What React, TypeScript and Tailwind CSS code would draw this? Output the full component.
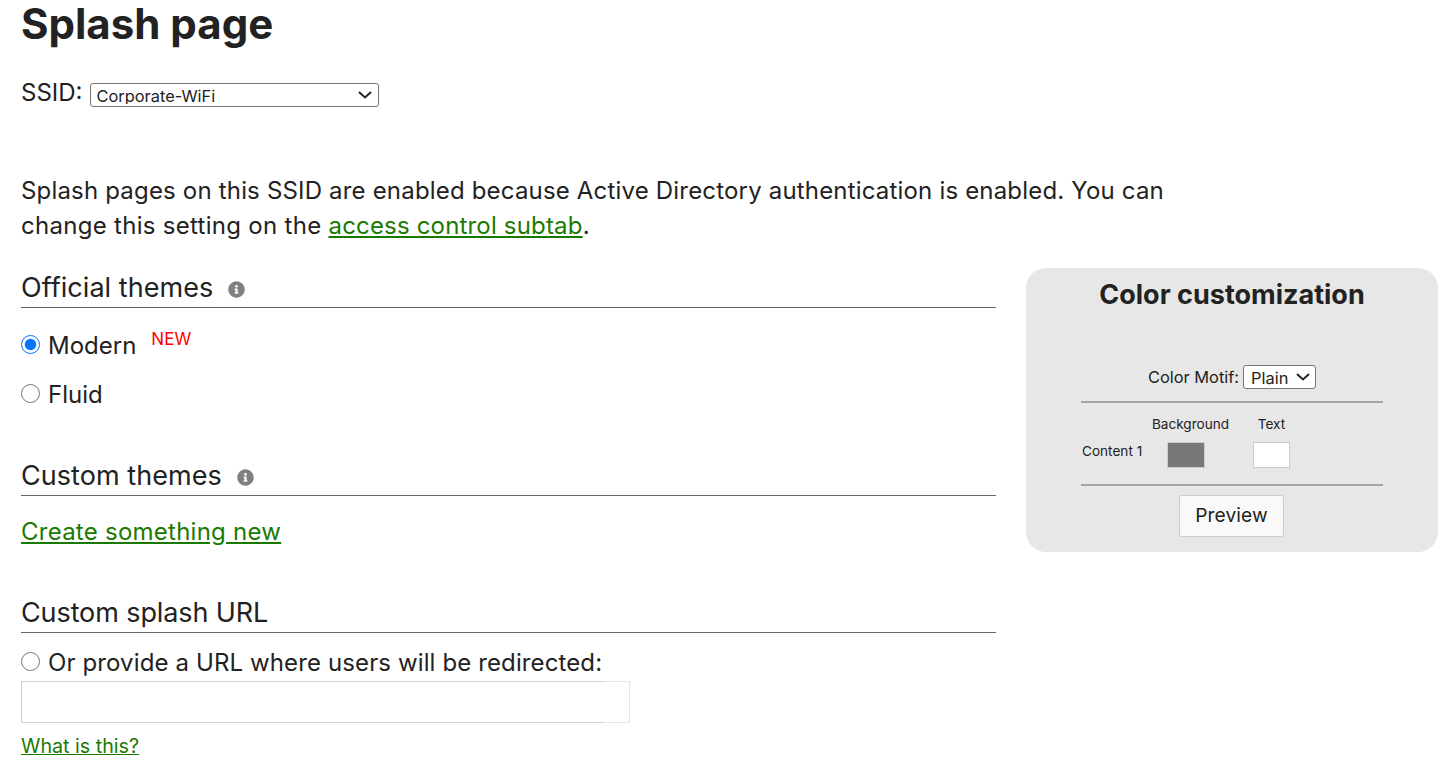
import React from 'react';

function InfoIcon() {
  return (
    <svg viewBox="0 0 512 512" className="w-[17px] h-[17px]" fill="#808080">
      <path d="M256 8C119 8 8 119 8 256s111 248 248 248 248-111 248-248S393 8 256 8zm0 110c23.2 0 42 18.8 42 42s-18.800 42-42 42-42-18.800-42-42 18.800-42 42-42zm56 254c0 6.600-5.400 12-12 12h-88c-6.600 0-12-5.400-12-12v-24c0-6.600 5.400-12 12-12h12v-64h-12c-6.600 0-12-5.400-12-12v-24c0-6.600 5.400-12 12-12h64c6.600 0 12 5.400 12 12v100h12c6.600 0 12 5.400 12 12v24z" />
    </svg>
  );
}

function Chevron({ className }: { className: string }) {
  return (
    <svg viewBox="0 0 14 8" className={`absolute pointer-events-none w-[14px] h-[8px] ${className}`} fill="none" stroke="#222222" strokeWidth="2">
      <path d="M1 1l6 5.500 6-5.500" />
    </svg>
  );
}

function SectionHeader({ title, info }: { title: string; info?: boolean }) {
  return (
    <div className="flex items-center h-[40px] border-b border-[#666666]">
      <h2 className={info ? 'text-[27px] font-normal tracking-[0.05px] leading-[40px]' : 'text-[27px] font-normal tracking-[-0.1px] leading-[40px]'}>
        {title}
      </h2>
      {info && (
        <span className="ml-[15px] mt-[4px]">
          <InfoIcon />
        </span>
      )}
    </div>
  );
}

export default function App() {
  return (
    <div className="pl-[21px] pr-[16px] text-[#222222] bg-white h-[773px] overflow-hidden font-['Inter',sans-serif]">
      <h1 className="text-[42px] font-bold leading-[48px]">Splash page</h1>

      <div className="flex items-center mt-[32px] h-[26px]">
        <label className="text-[24px] mr-[8px]">SSID:</label>
        <div className="relative mt-[3px]">
          <select className="block appearance-none w-[289px] h-[24px] pl-[5px] pb-[2px] text-[16.4px] bg-white border border-[#767676] rounded-[3px]">
            <option>Corporate-WiFi</option>
          </select>
          <Chevron className="right-[7px] top-[8px]" />
        </div>
      </div>

      <p className="mt-[67px] w-[1180px] text-[24px] tracking-[0.18px] leading-[35px]">
        Splash pages on this SSID are enabled because Active Directory authentication is enabled. You can
        <br />
        <span className="tracking-[0.29px]">change this setting on the </span>
        <a href="#" className="text-[#1a7a00] underline">
          access control subtab
        </a>
        .
      </p>

      <div className="flex items-start gap-[30px] mt-[25px]">
        <div className="w-[975px] shrink-0">
          <SectionHeader title="Official themes" info />
          <label className="flex items-center mt-[22px] h-[32px] text-[24px]">
            <input type="radio" name="theme" defaultChecked className="w-[19px] h-[19px] mb-[3px] accent-[#0075ff]" />
            <span className="ml-[8px]">Modern</span>
            <span className="ml-[15px] mb-[12px] text-[17px] text-[#ff0000]">NEW</span>
          </label>
          <label className="flex items-center mt-[17px] h-[32px] text-[24px]">
            <input type="radio" name="theme" className="w-[19px] h-[19px] mb-[3px]" />
            <span className="ml-[8px]">Fluid</span>
          </label>

          <div className="mt-[45px]">
            <SectionHeader title="Custom themes" info />
          </div>
          <a href="#" className="block mt-[18px] text-[24px] tracking-[0.25px] leading-[35px] text-[#1a7a00] underline">
            Create something new
          </a>

          <div className="mt-[44px]">
            <SectionHeader title="Custom splash URL" />
          </div>
          <label className="flex items-center mt-[14px] h-[32px] text-[24px] tracking-[0.12px]">
            <input type="radio" name="url" className="w-[19px] h-[19px] mb-[3px]" />
            <span className="ml-[8px]">Or provide a URL where users will be redirected:</span>
          </label>
          <input
            type="text"
            className="block w-[609px] h-[42px] mt-[2px] border bg-white [border-image:linear-gradient(to_right,#d0d0d0_582px,#e6e6e6_582px)_1]"
          />
          <a href="#" className="block mt-[10px] text-[19.7px] leading-[26px] text-[#1a7a00] underline">
            What is this?
          </a>
        </div>

        <div className="w-[412px] h-[284px] shrink-0 rounded-[20px] bg-[#e7e7e7] flex flex-col items-center">
          <h3 className="mt-[9px] text-[27px] font-bold leading-[36px]">Color customization</h3>
          <div className="flex items-center mt-[52px] h-[24px] text-[16.4px]">
            <span className="mr-[4px]">Color Motif:</span>
            <div className="relative">
              <select className="block appearance-none w-[73px] h-[24px] pl-[7px] pb-[2px] bg-white border border-[#767676] rounded-[3px]">
                <option>Plain</option>
              </select>
              <Chevron className="right-[6px] top-[8px]" />
            </div>
          </div>
          <div className="w-[302px] mt-[12px] border-t-2 border-[#a6a6a6]">
            <div className="grid grid-cols-[70px_82px_80px] text-[13.6px] pt-[11px]">
              <span />
              <span className="text-center leading-[21px] mr-[3px] whitespace-nowrap">Background</span>
              <span className="text-center leading-[21px] mr-[3px]">Text</span>
              <span className="ml-[1px] mt-[6px] leading-[21px] whitespace-nowrap">Content 1</span>
              <span className="flex justify-center mt-[7px] mr-[12px]">
                <span className="block w-[38px] h-[26px] bg-[#787878] border border-[#cccccc]" />
              </span>
              <span className="flex justify-center mt-[7px] mr-[3px]">
                <span className="block w-[37px] h-[26px] bg-white border border-[#cccccc]" />
              </span>
            </div>
          </div>
          <div className="w-[302px] mt-[16px] border-t-2 border-[#a6a6a6] flex justify-center">
            <button className="mt-[9px] mr-[1px] w-[105px] h-[42px] pb-[2px] text-[19.2px] tracking-[0.1px] bg-[#f9f9f9] border border-[#cccccc] rounded-[3px]">
              Preview
            </button>
          </div>
        </div>
      </div>
    </div>
  );
}
